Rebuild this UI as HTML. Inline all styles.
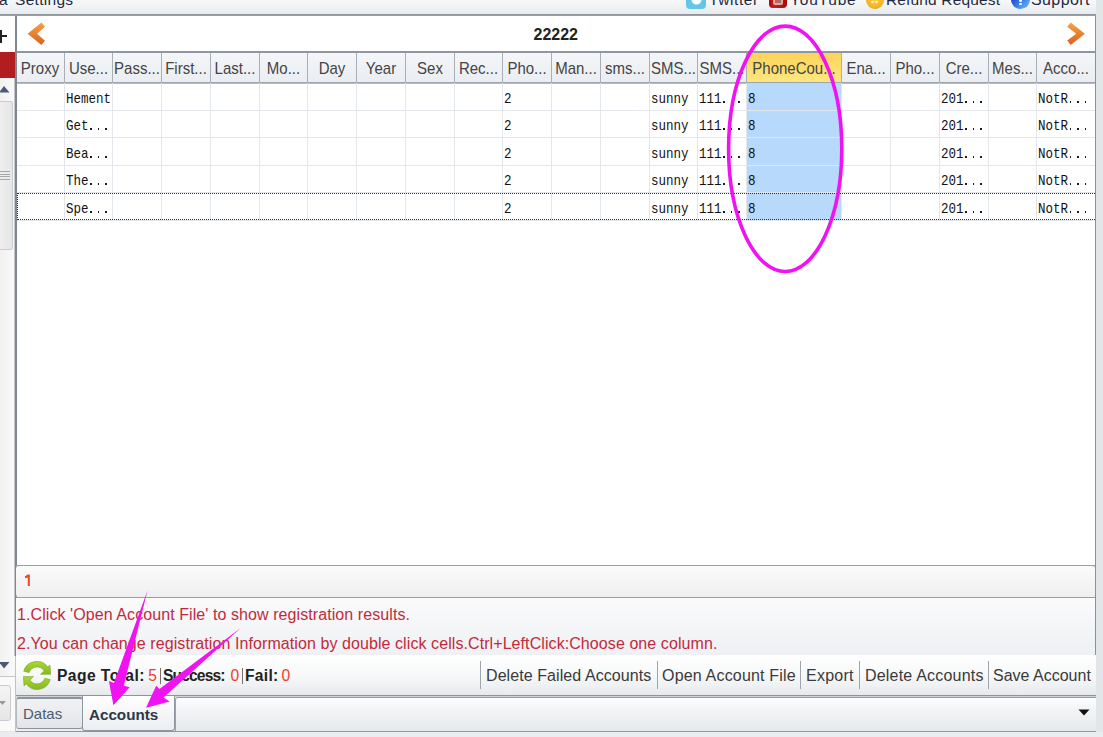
<!DOCTYPE html>
<html><head><meta charset="utf-8">
<style>
*{margin:0;padding:0;box-sizing:border-box}
html,body{width:1103px;height:737px;overflow:hidden;background:#e3e6e9;font-family:"Liberation Sans",sans-serif;position:relative}
div,span,svg{position:absolute}
.hc{top:52.7px;height:29px;line-height:29px;font-size:15px;color:#444;transform:scaleY(1.13);text-align:center;white-space:nowrap;overflow:hidden}
.hs{top:53px;width:1px;height:29px;background:#a9afb6}
.cs{top:83px;width:1px;height:137px;background:#e3e6ea}
.rl{left:16px;width:1079px;height:1px;background:#e3e6ea}
.dc{font-family:"Liberation Mono",monospace;font-size:12.5px;letter-spacing:0px;transform:scaleY(1.2);transform-origin:0 100%;color:#111;white-space:nowrap;line-height:16px;height:16px}
.msg{left:17px;font-size:16px;letter-spacing:0.08px;color:#c22a3c;white-space:nowrap;line-height:18px}
.btn{top:667px;font-size:16px;color:#3a3a3a;white-space:nowrap;line-height:18px}
.bsep{top:661px;width:1px;height:28px;background:#a0a5ab}
.tl{top:-9.5px;font-size:15.5px;color:#1e2a44;white-space:nowrap;line-height:18px}
</style></head><body>

<div style="left:0;top:0;width:1096px;height:14px;background:linear-gradient(#f7f8fa,#e8ebee)"></div>
<div style="left:0;top:14px;width:1096px;height:2px;background:linear-gradient(#8b929b,#9ca2aa)"></div>
<span class="tl" style="left:-1px">a</span>
<span class="tl" style="left:15px;letter-spacing:0.3px">Settings</span>
<div style="left:686px;top:-4px;width:20px;height:12.7px;border-radius:4px;background:#64c6e7;overflow:hidden"><div style="left:5px;top:-2px;width:11px;height:11px;border-radius:50%;background:radial-gradient(circle,#fff 55%,rgba(255,255,255,0) 75%)"></div></div>
<span class="tl" style="left:709px;letter-spacing:0.6px">Twitter</span>
<div style="left:769px;top:-6px;width:17.5px;height:13.8px;border-radius:4px;background:linear-gradient(90deg,#a80a0a,#cc1c1c 30%,#a50b0b);overflow:hidden"><div style="left:4px;top:0;width:9.5px;height:10.8px;border-radius:2px;background:#d9aaa0"></div><div style="left:6px;top:6px;width:6px;height:2.5px;background:#b56a60"></div></div>
<span class="tl" style="left:790px;letter-spacing:0.8px">YouTube</span>
<div style="left:865.5px;top:-9.5px;width:18px;height:18px;border-radius:50%;background:radial-gradient(circle at 50% 40%,#ffd24a,#f0b020 70%,#8a6a18 95%)"><div style="left:5px;top:10px;width:3px;height:2.5px;border-radius:50%;background:#fff2c0"></div><div style="left:9px;top:10px;width:3px;height:2.5px;border-radius:50%;background:#fff2c0"></div></div>
<span class="tl" style="left:886px;letter-spacing:0.15px">Refund Request</span>
<div style="left:1010.5px;top:-10px;width:19px;height:18.7px;border-radius:50%;background:linear-gradient(135deg,#1a4fd0 30%,#58a6f2 80%,#3a6ab0)"><div style="left:8px;top:8.5px;width:3px;height:3px;border-radius:50%;background:#fff"></div><div style="left:8px;top:12.5px;width:3px;height:2.8px;border-radius:50%;background:#fff"></div></div>
<span class="tl" style="left:1031px;font-size:16px;letter-spacing:0.4px">Support</span>
<div style="left:0;top:16px;width:15px;height:715px;background:linear-gradient(90deg,#f1f1f1,#fafafa)"></div>
<div style="left:0;top:16px;width:15px;height:36px;background:#fdfdfd"></div>
<div style="left:0;top:30px;width:2px;height:13px;background:#222"></div>
<div style="left:0;top:35px;width:7px;height:2px;background:#222"></div>
<div style="left:0;top:52px;width:15px;height:26px;background:#b21d1f"></div>
<svg style="left:0;top:84px" width="15" height="10"><polygon points="-1,8.5 4,2 9.5,8.5" fill="#4b5878"/></svg>
<div style="left:-2px;top:101px;width:14.5px;height:148.5px;background:linear-gradient(90deg,#f0f0f0,#e6e6e6);border:1px solid #c9cdd1;border-radius:2px"></div>
<div style="left:0;top:171px;width:10px;height:1px;background:#a4a9ae"></div>
<div style="left:0;top:174px;width:10px;height:1px;background:#a4a9ae"></div>
<div style="left:0;top:176px;width:10px;height:1px;background:#a4a9ae"></div>
<div style="left:0;top:179px;width:10px;height:1px;background:#a4a9ae"></div>
<svg style="left:0;top:660px" width="15" height="12"><polygon points="-1,2 9.5,2 4,8.5" fill="#4b5878"/></svg>
<div style="left:0;top:676px;width:15px;height:1px;background:#c5c9ce"></div>
<div style="left:0;top:677px;width:15px;height:54px;background:#fafafa"></div>
<div style="left:-3px;top:685px;width:14px;height:36px;background:linear-gradient(#f4f4f4,#e6e6e6);border:1px solid #c9cdd1;border-radius:3px"></div>
<svg style="left:0;top:700px" width="12" height="8"><polygon points="-1,1 6,1 2.5,5" fill="#9a9a9a"/></svg>
<div style="left:16px;top:16px;width:1079px;height:549px;background:#fff"></div>
<svg style="left:16px;top:16px" width="1079" height="36"><defs><linearGradient id="og" x1="0" y1="0" x2="0" y2="1"><stop offset="0" stop-color="#f4a444"/><stop offset="1" stop-color="#de5f1e"/></linearGradient></defs><polygon points="11.6,17.7 25.4,6.6 29,10.7 21.1,17.7 29,24.8 25.4,28.9" fill="url(#og)"/><polygon points="1068.9,17.7 1054.7,6.6 1051.2,10.7 1060.2,17.7 1051.2,24.5 1054.7,28.9" fill="url(#og)"/></svg>
<span style="left:533.5px;top:26.5px;font-size:16px;font-weight:bold;color:#222;line-height:16px">22222</span>
<div style="left:16px;top:51px;width:1079px;height:2px;background:#8f969f"></div>
<div style="left:16px;top:53px;width:1079px;height:29px;background:linear-gradient(#f4f6f9,#eaedf1)"></div>
<div style="left:16px;top:82px;width:1079px;height:2px;background:linear-gradient(#959ba3,#c3c7cc)"></div>
<div style="left:747px;top:53px;width:94px;height:29px;background:linear-gradient(#fdd35a,#fee77f)"></div>
<span class="hc" style="left:16px;width:48px">Proxy</span>
<span class="hc" style="left:65px;width:47px">Use...</span>
<span class="hc" style="left:113px;width:48px">Pass...</span>
<span class="hc" style="left:162px;width:48px">First...</span>
<span class="hc" style="left:211px;width:48px">Last...</span>
<span class="hc" style="left:260px;width:47px">Mo...</span>
<span class="hc" style="left:308px;width:48px">Day</span>
<span class="hc" style="left:357px;width:48px">Year</span>
<span class="hc" style="left:406px;width:48px">Sex</span>
<span class="hc" style="left:455px;width:47px">Rec...</span>
<span class="hc" style="left:503px;width:48px">Pho...</span>
<span class="hc" style="left:552px;width:48px">Man...</span>
<span class="hc" style="left:601px;width:48px">sms...</span>
<span class="hc" style="left:650px;width:47px">SMS...</span>
<span class="hc" style="left:698px;width:48px">SMS...</span>
<span class="hc" style="left:747px;width:94px">PhoneCou...</span>
<span class="hc" style="left:842px;width:48px">Ena...</span>
<span class="hc" style="left:891px;width:48px">Pho...</span>
<span class="hc" style="left:940px;width:48px">Cre...</span>
<span class="hc" style="left:989px;width:47px">Mes...</span>
<span class="hc" style="left:1037px;width:58px">Acco...</span>
<div class="hs" style="left:64px"></div>
<div class="hs" style="left:112px"></div>
<div class="hs" style="left:161px"></div>
<div class="hs" style="left:210px"></div>
<div class="hs" style="left:259px"></div>
<div class="hs" style="left:307px"></div>
<div class="hs" style="left:356px"></div>
<div class="hs" style="left:405px"></div>
<div class="hs" style="left:454px"></div>
<div class="hs" style="left:502px"></div>
<div class="hs" style="left:551px"></div>
<div class="hs" style="left:600px"></div>
<div class="hs" style="left:649px"></div>
<div class="hs" style="left:697px"></div>
<div class="hs" style="left:746px"></div>
<div class="hs" style="left:841px"></div>
<div class="hs" style="left:890px"></div>
<div class="hs" style="left:939px"></div>
<div class="hs" style="left:988px"></div>
<div class="hs" style="left:1036px"></div>
<div style="left:747px;top:83px;width:94px;height:137px;background:#b7d9fb"></div>
<div class="rl" style="top:110px"></div>
<div class="rl" style="top:137px"></div>
<div class="rl" style="top:165px"></div>
<div class="rl" style="top:192px"></div>
<div class="rl" style="top:220px"></div>
<div class="cs" style="left:64px"></div>
<div class="cs" style="left:112px"></div>
<div class="cs" style="left:161px"></div>
<div class="cs" style="left:210px"></div>
<div class="cs" style="left:259px"></div>
<div class="cs" style="left:307px"></div>
<div class="cs" style="left:356px"></div>
<div class="cs" style="left:405px"></div>
<div class="cs" style="left:454px"></div>
<div class="cs" style="left:502px"></div>
<div class="cs" style="left:551px"></div>
<div class="cs" style="left:600px"></div>
<div class="cs" style="left:649px"></div>
<div class="cs" style="left:697px"></div>
<div class="cs" style="left:746px"></div>
<div class="cs" style="left:841px"></div>
<div class="cs" style="left:890px"></div>
<div class="cs" style="left:939px"></div>
<div class="cs" style="left:988px"></div>
<div class="cs" style="left:1036px"></div>
<span class="dc" style="left:66px;top:92.5px">Hement</span>
<span class="dc" style="left:66px;top:119.5px">Get</span>
<div style="left:90.0px;top:128px;width:1.7px;height:2px;background:#1a1a1a"></div>
<div style="left:97.5px;top:128px;width:1.7px;height:2px;background:#1a1a1a"></div>
<div style="left:105.0px;top:128px;width:1.7px;height:2px;background:#1a1a1a"></div>
<span class="dc" style="left:66px;top:147.5px">Bea</span>
<div style="left:90.0px;top:156px;width:1.7px;height:2px;background:#1a1a1a"></div>
<div style="left:97.5px;top:156px;width:1.7px;height:2px;background:#1a1a1a"></div>
<div style="left:105.0px;top:156px;width:1.7px;height:2px;background:#1a1a1a"></div>
<span class="dc" style="left:66px;top:174.5px">The</span>
<div style="left:90.0px;top:183px;width:1.7px;height:2px;background:#1a1a1a"></div>
<div style="left:97.5px;top:183px;width:1.7px;height:2px;background:#1a1a1a"></div>
<div style="left:105.0px;top:183px;width:1.7px;height:2px;background:#1a1a1a"></div>
<span class="dc" style="left:66px;top:202.5px">Spe</span>
<div style="left:90.0px;top:211px;width:1.7px;height:2px;background:#1a1a1a"></div>
<div style="left:97.5px;top:211px;width:1.7px;height:2px;background:#1a1a1a"></div>
<div style="left:105.0px;top:211px;width:1.7px;height:2px;background:#1a1a1a"></div>
<span class="dc" style="left:504px;top:92.5px">2</span>
<span class="dc" style="left:504px;top:119.5px">2</span>
<span class="dc" style="left:504px;top:147.5px">2</span>
<span class="dc" style="left:504px;top:174.5px">2</span>
<span class="dc" style="left:504px;top:202.5px">2</span>
<span class="dc" style="left:651px;top:92.5px">sunny</span>
<span class="dc" style="left:651px;top:119.5px">sunny</span>
<span class="dc" style="left:651px;top:147.5px">sunny</span>
<span class="dc" style="left:651px;top:174.5px">sunny</span>
<span class="dc" style="left:651px;top:202.5px">sunny</span>
<span class="dc" style="left:699px;top:92.5px">111</span>
<div style="left:723.0px;top:101px;width:1.7px;height:2px;background:#1a1a1a"></div>
<div style="left:730.5px;top:101px;width:1.7px;height:2px;background:#1a1a1a"></div>
<div style="left:738.0px;top:101px;width:1.7px;height:2px;background:#1a1a1a"></div>
<span class="dc" style="left:699px;top:119.5px">111</span>
<div style="left:723.0px;top:128px;width:1.7px;height:2px;background:#1a1a1a"></div>
<div style="left:730.5px;top:128px;width:1.7px;height:2px;background:#1a1a1a"></div>
<div style="left:738.0px;top:128px;width:1.7px;height:2px;background:#1a1a1a"></div>
<span class="dc" style="left:699px;top:147.5px">111</span>
<div style="left:723.0px;top:156px;width:1.7px;height:2px;background:#1a1a1a"></div>
<div style="left:730.5px;top:156px;width:1.7px;height:2px;background:#1a1a1a"></div>
<div style="left:738.0px;top:156px;width:1.7px;height:2px;background:#1a1a1a"></div>
<span class="dc" style="left:699px;top:174.5px">111</span>
<div style="left:723.0px;top:183px;width:1.7px;height:2px;background:#1a1a1a"></div>
<div style="left:730.5px;top:183px;width:1.7px;height:2px;background:#1a1a1a"></div>
<div style="left:738.0px;top:183px;width:1.7px;height:2px;background:#1a1a1a"></div>
<span class="dc" style="left:699px;top:202.5px">111</span>
<div style="left:723.0px;top:211px;width:1.7px;height:2px;background:#1a1a1a"></div>
<div style="left:730.5px;top:211px;width:1.7px;height:2px;background:#1a1a1a"></div>
<div style="left:738.0px;top:211px;width:1.7px;height:2px;background:#1a1a1a"></div>
<span class="dc" style="left:748px;top:92.5px">8</span>
<span class="dc" style="left:748px;top:119.5px">8</span>
<span class="dc" style="left:748px;top:147.5px">8</span>
<span class="dc" style="left:748px;top:174.5px">8</span>
<span class="dc" style="left:748px;top:202.5px">8</span>
<span class="dc" style="left:941px;top:92.5px">201</span>
<div style="left:965.0px;top:101px;width:1.7px;height:2px;background:#1a1a1a"></div>
<div style="left:972.5px;top:101px;width:1.7px;height:2px;background:#1a1a1a"></div>
<div style="left:980.0px;top:101px;width:1.7px;height:2px;background:#1a1a1a"></div>
<span class="dc" style="left:941px;top:119.5px">201</span>
<div style="left:965.0px;top:128px;width:1.7px;height:2px;background:#1a1a1a"></div>
<div style="left:972.5px;top:128px;width:1.7px;height:2px;background:#1a1a1a"></div>
<div style="left:980.0px;top:128px;width:1.7px;height:2px;background:#1a1a1a"></div>
<span class="dc" style="left:941px;top:147.5px">201</span>
<div style="left:965.0px;top:156px;width:1.7px;height:2px;background:#1a1a1a"></div>
<div style="left:972.5px;top:156px;width:1.7px;height:2px;background:#1a1a1a"></div>
<div style="left:980.0px;top:156px;width:1.7px;height:2px;background:#1a1a1a"></div>
<span class="dc" style="left:941px;top:174.5px">201</span>
<div style="left:965.0px;top:183px;width:1.7px;height:2px;background:#1a1a1a"></div>
<div style="left:972.5px;top:183px;width:1.7px;height:2px;background:#1a1a1a"></div>
<div style="left:980.0px;top:183px;width:1.7px;height:2px;background:#1a1a1a"></div>
<span class="dc" style="left:941px;top:202.5px">201</span>
<div style="left:965.0px;top:211px;width:1.7px;height:2px;background:#1a1a1a"></div>
<div style="left:972.5px;top:211px;width:1.7px;height:2px;background:#1a1a1a"></div>
<div style="left:980.0px;top:211px;width:1.7px;height:2px;background:#1a1a1a"></div>
<span class="dc" style="left:1038px;top:92.5px">NotR</span>
<div style="left:1069.5px;top:101px;width:1.7px;height:2px;background:#1a1a1a"></div>
<div style="left:1077.0px;top:101px;width:1.7px;height:2px;background:#1a1a1a"></div>
<div style="left:1084.5px;top:101px;width:1.7px;height:2px;background:#1a1a1a"></div>
<span class="dc" style="left:1038px;top:119.5px">NotR</span>
<div style="left:1069.5px;top:128px;width:1.7px;height:2px;background:#1a1a1a"></div>
<div style="left:1077.0px;top:128px;width:1.7px;height:2px;background:#1a1a1a"></div>
<div style="left:1084.5px;top:128px;width:1.7px;height:2px;background:#1a1a1a"></div>
<span class="dc" style="left:1038px;top:147.5px">NotR</span>
<div style="left:1069.5px;top:156px;width:1.7px;height:2px;background:#1a1a1a"></div>
<div style="left:1077.0px;top:156px;width:1.7px;height:2px;background:#1a1a1a"></div>
<div style="left:1084.5px;top:156px;width:1.7px;height:2px;background:#1a1a1a"></div>
<span class="dc" style="left:1038px;top:174.5px">NotR</span>
<div style="left:1069.5px;top:183px;width:1.7px;height:2px;background:#1a1a1a"></div>
<div style="left:1077.0px;top:183px;width:1.7px;height:2px;background:#1a1a1a"></div>
<div style="left:1084.5px;top:183px;width:1.7px;height:2px;background:#1a1a1a"></div>
<span class="dc" style="left:1038px;top:202.5px">NotR</span>
<div style="left:1069.5px;top:211px;width:1.7px;height:2px;background:#1a1a1a"></div>
<div style="left:1077.0px;top:211px;width:1.7px;height:2px;background:#1a1a1a"></div>
<div style="left:1084.5px;top:211px;width:1.7px;height:2px;background:#1a1a1a"></div>
<div style="left:17px;top:193px;width:1078px;height:27px;border:1px dotted #333;border-right:none"></div>
<div style="left:14px;top:78px;width:1px;height:578px;background:#c3c7cb"></div><div style="left:15px;top:16px;width:2px;height:640px;background:#80878f"></div>
<div style="left:1095px;top:16px;width:1px;height:640px;background:#8a919a"></div>
<div style="left:16px;top:565px;width:1079px;height:2px;background:linear-gradient(#8f969f,#b5bac0)"></div>
<div style="left:16px;top:566px;width:1079px;height:31px;background:linear-gradient(#fbfbfb,#efefef);border-radius:3px"></div>
<svg style="left:19.3px;top:570px" width="20" height="20"><polygon points="5.8,6.4 8.8,4.6 10.8,4.6 10.8,16 8.8,16 8.8,7.4 6.2,8.2" fill="#f04428"/></svg>
<div style="left:16px;top:597px;width:1079px;height:2px;background:linear-gradient(#8f969f,#b5bac0)"></div>
<div style="left:16px;top:598px;width:1079px;height:57px;background:linear-gradient(#fbfbfc,#eef0f3)"></div>
<span class="msg" style="top:606px">1.Click 'Open Account File' to show registration results.</span>
<span class="msg" style="top:635px">2.You can change registration Information by double click cells.Ctrl+LeftClick:Choose one column.</span>
<div style="left:16px;top:655px;width:1080px;height:40px;background:linear-gradient(#ffffff 0%,#f7f8f9 50%,#e7eaed 100%)"></div>
<div style="left:16px;top:695px;width:1080px;height:1px;background:#8d949c"></div><div style="left:16px;top:696px;width:1080px;height:1px;background:#d0d4d8"></div>
<svg style="left:23px;top:661px" width="28" height="29" viewBox="0 0 28 29"><defs><linearGradient id="gg" x1="0" y1="0" x2="0" y2="1"><stop offset="0" stop-color="#aad636"/><stop offset="1" stop-color="#86b824"/></linearGradient></defs>
<path d="M0.7,10.3 A13.6,13.6 0 0 1 24.85,6.1 L27,4 L27.6,13.3 L17.5,13.3 L21.1,9.8 A8.4,8.4 0 0 0 6.2,11.6 Z" fill="url(#gg)" stroke="#7aab1c" stroke-width="0.6"/>
<path d="M27.3,18.6 A13.6,13.6 0 0 1 3.15,22.8 L1,24.9 L0.4,15.6 L10.5,15.6 L6.9,19.1 A8.4,8.4 0 0 0 21.8,17.3 Z" fill="url(#gg)" stroke="#7aab1c" stroke-width="0.6"/></svg>
<span style="left:57px;letter-spacing:0.45px;top:667px;font-size:15.6px;font-weight:bold;color:#222;white-space:nowrap;line-height:18px">Page Total:</span>
<span style="left:148.3px;top:667px;font-size:15.6px;color:#f0402a;white-space:nowrap;line-height:18px">5</span>
<div style="left:160px;top:668px;width:1px;height:16px;background:#7a6e68"></div>
<span style="left:163px;letter-spacing:-0.85px;top:667px;font-size:15.6px;font-weight:bold;color:#222;white-space:nowrap;line-height:18px">Success:</span>
<span style="left:230.5px;top:667px;font-size:15.6px;color:#f0402a;white-space:nowrap;line-height:18px">0</span>
<div style="left:242px;top:668px;width:1px;height:16px;background:#7a6e68"></div>
<span style="left:245px;letter-spacing:0.3px;top:667px;font-size:15.6px;font-weight:bold;color:#222;white-space:nowrap;line-height:18px">Fail:</span>
<span style="left:281.5px;top:667px;font-size:15.6px;color:#f0402a;white-space:nowrap;line-height:18px">0</span>
<div class="bsep" style="left:480px"></div>
<div class="bsep" style="left:657px"></div>
<div class="bsep" style="left:800px"></div>
<div class="bsep" style="left:859px"></div>
<div class="bsep" style="left:988px"></div>
<span class="btn" style="left:486px;letter-spacing:0.08px">Delete Failed Accounts</span>
<span class="btn" style="left:662px;letter-spacing:0.18px">Open Account File</span>
<span class="btn" style="left:806px;letter-spacing:0.25px">Export</span>
<span class="btn" style="left:865px;letter-spacing:0.2px">Delete Accounts</span>
<span class="btn" style="left:993px">Save Account</span>
<div style="left:16px;top:697px;width:1080px;height:34px;background:#eceef1"></div>
<div style="left:15px;top:656px;width:1px;height:76px;background:#c0c4c9"></div>
<div style="left:175px;top:697px;width:921px;height:34px;background:linear-gradient(#fdfdfe,#f1f3f5 40%,#e6e9ec);border-left:1px solid #9ca2a9;border-top:1px solid #959ba3;border-radius:3px 0 0 0"></div>
<div style="left:16px;top:731px;width:1080px;height:1px;background:#8f969f"></div>
<div style="left:16px;top:697px;width:67px;height:32px;background:linear-gradient(#eff1f3,#eaecef 50%,#e3e6e9);border:1px solid #8c939b;border-top-width:2px;border-left-color:#b5babf;border-radius:3px"></div>
<span style="left:23px;top:705px;font-size:15px;color:#4e5a6c;line-height:18px">Datas</span>
<div style="left:82px;top:696px;width:93px;height:35px;background:linear-gradient(#ffffff,#f3f4f6 60%,#eceef1);border:1px solid #8f969f;border-top:none;border-radius:0 0 3px 3px"></div>
<span style="left:89px;top:706px;font-size:15.2px;font-weight:bold;color:#2e3846;line-height:18px">Accounts</span>
<svg style="left:1078px;top:709px" width="12" height="8"><polygon points="0.5,0.5 11.5,0.5 6,6.5" fill="#111"/></svg>
<div style="left:0;top:732px;width:1103px;height:5px;background:#eaecef"></div>
<svg style="left:0;top:0" width="1103" height="737">
<ellipse cx="785.2" cy="148.8" rx="56.6" ry="122.7" fill="none" stroke="#f012f0" stroke-width="3.6"/>
<polygon points="147.5,590.4 123.8,685.8 129.7,687.3 113.4,705.3 108.9,681 113.9,683" fill="#f012f0"/>
<polygon points="240.7,628.1 163.5,697.5 169.7,701.6 146,707.7 156.2,685.7 159.5,689" fill="#f012f0"/>
</svg>
</body></html>
